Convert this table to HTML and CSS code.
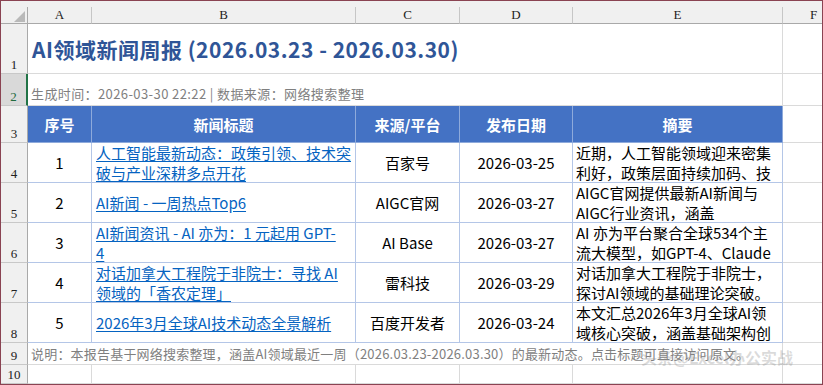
FILE: index.html
```html
<!DOCTYPE html>
<html lang="zh-CN">
<head>
<meta charset="utf-8">
<title>AI领域新闻周报</title>
<link rel="stylesheet" href="styles.css">
</head>
<body>
<div class="sheet">
  <div class="strip"></div>

  <div class="corner"><svg class="corner-tri" width="11" height="11" viewBox="0 0 11 11"><polygon points="11,0 11,11 0,11" fill="#b9b9b9"/></svg></div>
  <div class="colhead">A</div>
  <div class="colhead">B</div>
  <div class="colhead">C</div>
  <div class="colhead">D</div>
  <div class="colhead">E</div>
  <div class="colhead colhead-f">F</div>

  <div class="rowhead">1</div>
  <div class="cell merged title">AI领域新闻周报 (2026.03.23 - 2026.03.30)</div>
  <div class="cell fcol"></div>

  <div class="rowhead rowhead-active">2</div>
  <div class="cell merged meta">生成时间：2026-03-30 22:22 | 数据来源：网络搜索整理</div>
  <div class="cell fcol"></div>

  <div class="rowhead">3</div>
  <div class="th">序号</div>
  <div class="th">新闻标题</div>
  <div class="th">来源/平台</div>
  <div class="th">发布日期</div>
  <div class="th">摘要</div>
  <div class="cell fcol"></div>

  <div class="rowhead">4</div>
  <div class="td td-center">1</div>
  <div class="td td-link"><a href="#">人工智能最新动态：政策引领、技术突<br>破与产业深耕多点开花</a></div>
  <div class="td td-center">百家号</div>
  <div class="td td-center">2026-03-25</div>
  <div class="td td-sum">近期，人工智能领域迎来密集<br>利好，政策层面持续加码、技</div>
  <div class="cell fcol"></div>

  <div class="rowhead">5</div>
  <div class="td td-center">2</div>
  <div class="td td-link"><a href="#">AI新闻 - 一周热点Top6</a></div>
  <div class="td td-center">AIGC官网</div>
  <div class="td td-center">2026-03-27</div>
  <div class="td td-sum">AIGC官网提供最新AI新闻与<br>AIGC行业资讯，涵盖</div>
  <div class="cell fcol"></div>

  <div class="rowhead">6</div>
  <div class="td td-center">3</div>
  <div class="td td-link"><a href="#">AI新闻资讯 - AI 亦为：1 元起用 GPT-<br>4</a></div>
  <div class="td td-center">AI Base</div>
  <div class="td td-center">2026-03-27</div>
  <div class="td td-sum">AI 亦为平台聚合全球534个主<br>流大模型，如GPT-4、Claude</div>
  <div class="cell fcol"></div>

  <div class="rowhead">7</div>
  <div class="td td-center">4</div>
  <div class="td td-link"><a href="#">对话加拿大工程院于非院士：寻找 AI<br>领域的「香农定理」</a></div>
  <div class="td td-center">雷科技</div>
  <div class="td td-center">2026-03-29</div>
  <div class="td td-sum">对话加拿大工程院于非院士，<br>探讨AI领域的基础理论突破。</div>
  <div class="cell fcol"></div>

  <div class="rowhead">8</div>
  <div class="td td-center">5</div>
  <div class="td td-link"><a href="#">2026年3月全球AI技术动态全景解析</a></div>
  <div class="td td-center">百度开发者</div>
  <div class="td td-center">2026-03-24</div>
  <div class="td td-sum">本文汇总2026年3月全球AI领<br>域核心突破，涵盖基础架构创</div>
  <div class="cell fcol"></div>

  <div class="rowhead">9</div>
  <div class="cell merged note">说明：本报告基于网络搜索整理，涵盖AI领域最近一周（2026.03.23-2026.03.30）的最新动态。点击标题可直接访问原文。</div>
  <div class="cell fcol"></div>

  <div class="rowhead">10</div>
  <div class="cell"></div>
  <div class="cell"></div>
  <div class="cell"></div>
  <div class="cell"></div>
  <div class="cell"></div>
  <div class="cell fcol"></div>

  <div class="watermark">头条@Excel办公实战</div>
</div>
</body>
</html>
```

FILE: styles.css
```css
* {
  box-sizing: border-box;
}

html, body {
  margin: 0;
  padding: 0;
  background: #ffffff;
}

.sheet {
  position: relative;
  width: 823px;
  height: 385px;
  border: 1px solid #8a4352;
  overflow: hidden;
  display: grid;
  grid-template-columns: 27px 64px 264px 104px 113px 210px 39px;
  grid-template-rows: 6px 17px 50px 32px 37px 40px 40px 40px 40px 40px 22px 19px;
  font-family: "Noto Sans CJK SC", sans-serif;
  color: #000000;
  background: #ffffff;
}

.strip {
  grid-column: 1 / -1;
  background: #f0f0f0;
}

.corner {
  background: #f0f0f0;
  border-right: 1px solid #a9a9a9;
  border-bottom: 1px solid #a9a9a9;
  display: flex;
  justify-content: flex-end;
  align-items: flex-end;
  padding: 0 2px 1px 0;
}

.corner-tri {
  display: block;
}

.colhead {
  background: #f0f0f0;
  border-right: 1px solid #c6c6c6;
  border-bottom: 1px solid #a9a9a9;
  font-family: "Liberation Serif", serif;
  font-size: 13px;
  line-height: 16px;
  color: #222222;
  text-align: center;
}

.colhead-f {
  border-right: none;
  text-align: left;
  padding-left: 27px;
}

.rowhead {
  background: #f0f0f0;
  border-right: 1px solid #a9a9a9;
  border-bottom: 1px solid #c8c8c8;
  display: flex;
  justify-content: center;
  align-items: flex-end;
  font-family: "Liberation Serif", serif;
  font-size: 13px;
  line-height: 14px;
  color: #222222;
  padding-bottom: 1px;
}

.rowhead-active {
  background: #d9d9d9;
  color: #1f6b3e;
  border-right: 2px solid #217346;
}

.cell {
  border-right: 1px solid #dadada;
  border-bottom: 1px solid #dadada;
}

.fcol {
  border-right: none;
}

.merged {
  grid-column: span 5;
  white-space: nowrap;
}

.title {
  display: flex;
  align-items: center;
  padding-left: 4px;
  font-size: 21px;
  letter-spacing: 0.5px;
  font-weight: 700;
  color: #2f5597;
}

.meta {
  display: flex;
  align-items: flex-end;
  padding: 0 0 3px 3px;
  font-size: 13px;
  letter-spacing: 0.4px;
  line-height: 17px;
  color: #7f7f7f;
}

.note {
  display: flex;
  align-items: center;
  padding-left: 3px;
  font-size: 13px;
  letter-spacing: 0.2px;
  line-height: 17px;
  color: #7f7f7f;
}

.th {
  background: #4472c4;
  color: #ffffff;
  font-weight: 700;
  font-size: 15px;
  border-right: 1px solid #8eaadb;
  border-bottom: 1px solid #8eaadb;
  display: flex;
  align-items: center;
  justify-content: center;
}

.td {
  border-right: 1px solid #b4c6e7;
  border-bottom: 1px solid #b4c6e7;
  font-size: 15px;
  line-height: 20px;
  display: flex;
  align-items: center;
  overflow: hidden;
  white-space: nowrap;
}

.td-center {
  justify-content: center;
}

.td-link {
  padding-left: 4px;
}

.td-link a {
  color: #0563c1;
  text-decoration: underline;
  text-underline-offset: 2px;
}

.td-sum {
  padding-left: 3px;
}

.watermark {
  position: absolute;
  left: 640px;
  top: 346px;
  font-size: 16px;
  font-weight: 700;
  line-height: 20px;
  color: rgba(150, 150, 150, 0.35);
  white-space: nowrap;
  pointer-events: none;
}
```
